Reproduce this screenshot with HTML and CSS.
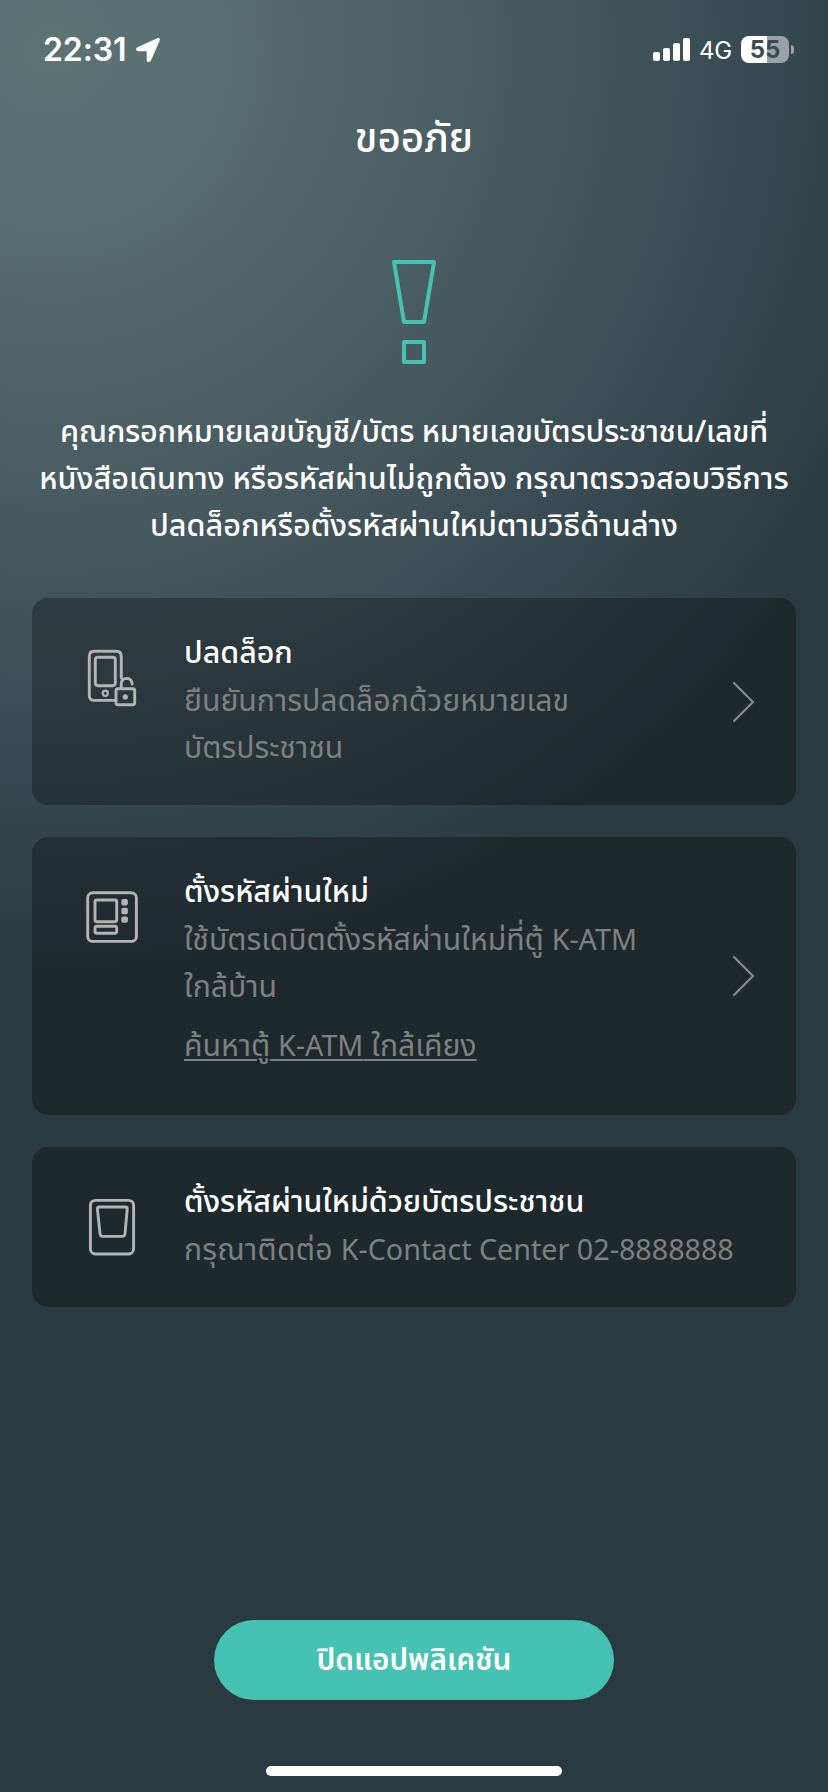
FILE: index.html
```html
<!DOCTYPE html>
<html lang="th">

<head>
    <meta charset="UTF-8">
    <meta name="viewport" content="width=device-width, initial-scale=1.0">
    <title>ขออภัย</title>
    <link rel="stylesheet" href="styles.css">
</head>

<body>
    <div class="status-bar">
        <span class="time">22:31</span>
        <svg class="location" width="26" height="26" viewBox="0 0 26 26">
            <path d="M2.4 10.3 L22.3 1.3 Q25.6 .3 24.7 3.6 L16 23.6 Q14.6 25.6 12.8 24.9 Q11.7 24.5 11.7 22.8 V14.3 H3.2 Q1.2 14.2 1.1 12.3 Q1.1 11 2.4 10.3 Z" fill="#fff"/>
        </svg>
        <svg class="signal" width="38" height="24" viewBox="0 0 38 24">
            <g fill="#fff">
                <rect x="0" y="14" width="7" height="9" rx="2"/>
                <rect x="10" y="10" width="7" height="13" rx="2"/>
                <rect x="20" y="5" width="7" height="18" rx="2"/>
                <rect x="30" y="0" width="7" height="23" rx="2"/>
            </g>
        </svg>
        <span class="network">4G</span>
        <span class="battery">55</span>
        <span class="battery-tip"></span>
    </div>

    <h1>ขออภัย</h1>

    <svg class="alert-icon" width="48" height="108" viewBox="0 0 48 108" fill="none" stroke="#46c2b3" stroke-width="4" stroke-linejoin="round">
        <path d="M4 4 H44 L34 64 H14 Z"/>
        <rect x="14" y="84" width="20" height="20"/>
    </svg>

    <p class="message">
        <span class="line-tight">คุณกรอกหมายเลขบัญชี/บัตร หมายเลขบัตรประชาชน/เลขที่</span><br>
        หนังสือเดินทาง หรือรหัสผ่านไม่ถูกต้อง กรุณาตรวจสอบวิธีการ<br>
        ปลดล็อกหรือตั้งรหัสผ่านใหม่ตามวิธีด้านล่าง
    </p>

    <div class="options">
        <div class="card card-unlock">
            <svg class="icon" width="60" height="60" viewBox="0 0 60 60" fill="none" stroke="#b4b4b4" stroke-width="2.9" stroke-linecap="round" stroke-linejoin="round">
                <path d="M33 52.4 H12.3 Q7.3 52.4 7.3 47.4 V8.3 Q7.3 3.3 12.3 3.3 H34.3 Q39.3 3.3 39.3 8.3 V30"/>
                <rect x="13.3" y="9.3" width="20" height="28.4" rx="2.6"/>
                <circle cx="23.3" cy="45.3" r="2.6" stroke-width="2.2"/>
                <rect x="34" y="40.7" width="18.7" height="16" rx="2"/>
                <path d="M39.3 40 V35.3 Q39.8 30.4 44.7 30.4 Q49.6 30.6 50.2 36"/>
                <circle cx="43.3" cy="48.9" r="2.6" fill="#b4b4b4" stroke="none"/>
            </svg>
            <div class="card-text">
                <h2>ปลดล็อก</h2>
                <p>ยืนยันการปลดล็อกด้วยหมายเลข<br>บัตรประชาชน</p>
            </div>
            <svg class="chevron" width="24" height="44" viewBox="0 0 24 44" fill="none" stroke="#8c8a8a" stroke-width="2.2" stroke-linecap="round" stroke-linejoin="round">
                <path d="M2 3 L21 22 L2 41"/>
            </svg>
        </div>

        <div class="card card-atm">
            <svg class="icon" width="60" height="60" viewBox="0 0 60 60" fill="none" stroke="#b4b4b4" stroke-width="2.9">
                <rect x="5.7" y="5.7" width="48.7" height="48.7" rx="5"/>
                <rect x="13" y="13" width="21.7" height="21.7" rx="1.6"/>
                <rect x="13" y="39.3" width="21.7" height="7" rx="2"/>
                <g fill="#b4b4b4" stroke="none">
                    <rect x="39.3" y="12" width="6.6" height="6.4" rx="1.8"/>
                    <rect x="39.3" y="20.8" width="6.6" height="6.4" rx="1.8"/>
                    <rect x="39.3" y="29.4" width="6.6" height="6.4" rx="1.8"/>
                </g>
            </svg>
            <div class="card-text">
                <h2>ตั้งรหัสผ่านใหม่</h2>
                <p>ใช้บัตรเดบิตตั้งรหัสผ่านใหม่ที่ตู้ <span class="latin">K-ATM</span><br>ใกล้บ้าน</p>
                <a class="link" href="#">ค้นหาตู้ <span class="latin">K-ATM</span> ใกล้เคียง</a>
            </div>
            <svg class="chevron" width="24" height="44" viewBox="0 0 24 44" fill="none" stroke="#8c8a8a" stroke-width="2.2" stroke-linecap="round" stroke-linejoin="round">
                <path d="M2 3 L21 22 L2 41"/>
            </svg>
        </div>

        <div class="card card-contact">
            <svg class="icon" width="60" height="60" viewBox="0 0 60 60" fill="none" stroke="#b4b4b4" stroke-width="2.9" stroke-linejoin="round">
                <rect x="8.4" y="3.4" width="43.2" height="53.6" rx="5"/>
                <path d="M17 10 H43.6 Q45.4 10 45.2 12 L43 36.6 Q42.6 39.4 40.4 39.4 H20.4 Q18.4 39.4 18 36.6 L15.4 12 Q15.3 10 17 10 Z"/>
            </svg>
            <div class="card-text">
                <h2>ตั้งรหัสผ่านใหม่ด้วยบัตรประชาชน</h2>
                <p><span class="contact">กรุณาติดต่อ</span> <span class="latin">K-Contact Center 02-8888888</span></p>
            </div>
        </div>
    </div>

    <button class="close-button">ปิดแอปพลิเคชัน</button>
    <div class="home-indicator"></div>
</body>

</html>
```
FILE: styles.css
```css
* {
    box-sizing: border-box;
}

body {
    margin: 0;
    width: 828px;
    height: 1792px;
    display: flex;
    flex-direction: column;
    align-items: center;
    overflow: hidden;
    color: #fff;
    font-family: "Noto Sans Thai", "Noto Sans", sans-serif;
    background: radial-gradient(circle 920px at 50px 50px, #5d7273 0%, #5a6f72 15%, #495d62 46%, #394b52 75%, #2a3a41 100%);
}

.status-bar {
    width: 100%;
    height: 99px;
    padding: 0 34px 0 43px;
    display: flex;
    align-items: center;
    font-family: Inter, sans-serif;
}

.time {
    font-size: 32px;
    font-weight: 600;
    letter-spacing: -0.1px;
}

.location {
    margin-left: 9px;
}

.signal {
    margin-left: auto;
}

.network {
    margin: 2px 0 0 8px;
    width: 34px;
    font-size: 24px;
    letter-spacing: -0.3px;
}

.battery {
    margin-left: 8px;
    width: 48px;
    height: 27px;
    border-radius: 8px;
    background: linear-gradient(to right, #fff 26px, #9aa2a6 26px);
    color: #3b4b52;
    font-size: 24px;
    font-weight: 700;
    line-height: 27px;
    text-align: center;
}

.battery-tip {
    margin-left: 2px;
    width: 3px;
    height: 9px;
    border-radius: 0 4px 4px 0;
    background: #9aa2a6;
}

h1 {
    margin: 11px 0 0;
    height: 60px;
    font-size: 40.3px;
    font-weight: 500;
    line-height: 60px;
}

.alert-icon {
    margin-top: 88px;
}

.message {
    margin: 44px 0 0;
    height: 141px;
    font-size: 30.6px;
    font-weight: 500;
    line-height: 47px;
    text-align: center;
    white-space: nowrap;
}

.line-tight {
    letter-spacing: -0.25px;
}

.options {
    margin-top: 47px;
    width: 764px;
    display: flex;
    flex-direction: column;
    gap: 32px;
}

.card {
    display: flex;
    padding: 0 40px 0 50px;
    border-radius: 16px;
    background: rgba(0, 0, 0, 0.28);
    white-space: nowrap;
}

.card-unlock {
    height: 207px;
}

.card-atm {
    height: 278px;
}

.card-contact {
    height: 160px;
}

.icon {
    margin-top: 50px;
    flex-shrink: 0;
}

.card-text {
    margin: 32px 0 0 42px;
    flex: 1;
}

h2 {
    margin: 0;
    font-size: 30.4px;
    font-weight: 500;
    line-height: 48px;
}

.card-text p {
    margin: 1px 0 0;
    color: #808080;
    font-size: 30.2px;
    line-height: 47px;
}

.latin {
    font-size: 28.7px;
    line-height: 1;
}

.contact {
    letter-spacing: 0.25px;
}

.link {
    display: inline-block;
    margin-top: 12px;
    color: #808080;
    font-size: 30.2px;
    line-height: 47px;
    text-underline-offset: 3px;
    text-decoration-thickness: 2px;
}

.chevron {
    align-self: center;
}

.close-button {
    margin-top: 313px;
    width: 400px;
    height: 80px;
    border: none;
    border-radius: 40px;
    background: #46c2b3;
    color: #fff;
    font-family: inherit;
    font-size: 29.8px;
    font-weight: 600;
}

.home-indicator {
    margin-top: 66px;
    width: 296px;
    height: 10px;
    border-radius: 5px;
    background: #fff;
}
```
